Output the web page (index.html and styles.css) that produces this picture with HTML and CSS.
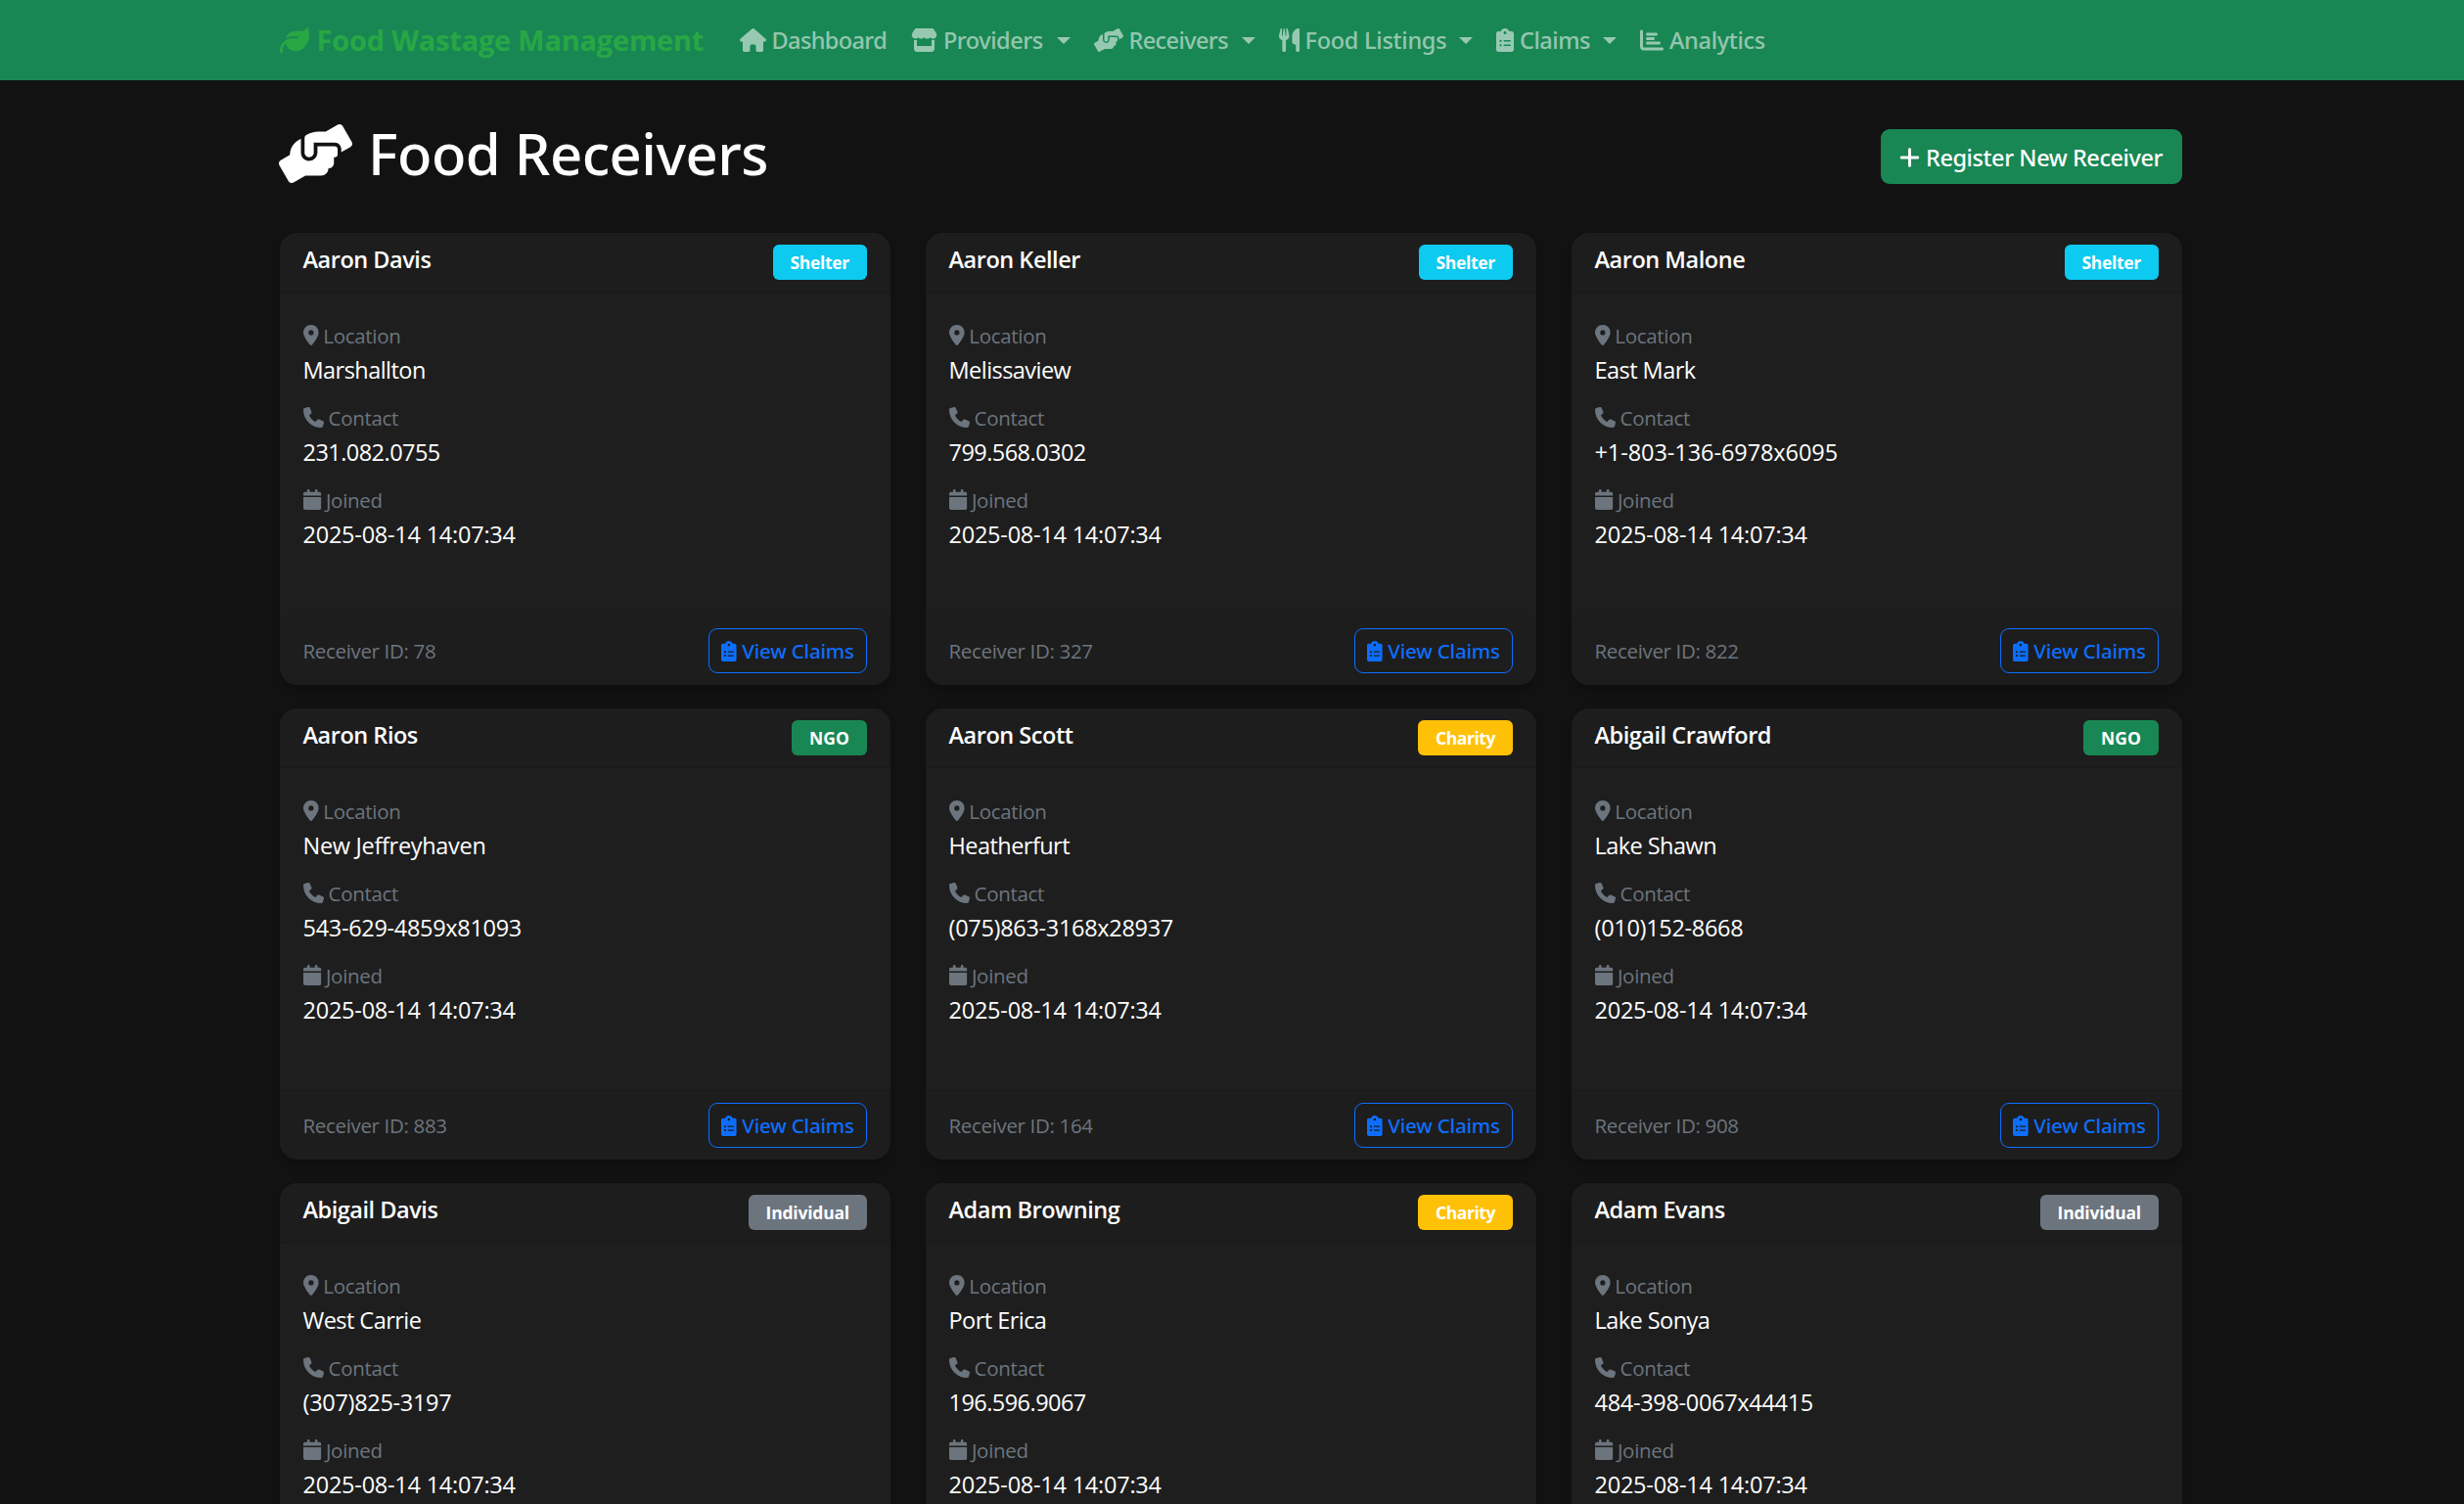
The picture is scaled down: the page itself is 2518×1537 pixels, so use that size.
FILE: index.html
```
<!DOCTYPE html>
<html lang="en">
<head>
<meta charset="utf-8">
<title>Food Receivers</title>
<link rel="stylesheet" href="styles.css">
</head>
<body>
<svg class="sprite" aria-hidden="true">
<symbol id="leaf" viewBox="0 0 512 512"><path d="M272 96c-78.6 0-145.1 51.5-167.7 122.5c33.6-17 71.5-26.5 111.7-26.5h88c8.8 0 16 7.2 16 16s-7.2 16-16 16H288 216s0 0 0 0c-16.6 0-32.7 1.9-48.3 5.4c-25.9 5.9-49.9 16.4-71.4 30.7c0 0 0 0 0 0C38.3 298.8 0 364.9 0 440v16c0 13.3 10.7 24 24 24s24-10.7 24-24V440c0-48.7 20.7-92.5 53.8-123.2C121.6 392.3 190.3 448 272 448l1 0c132.1-.7 239-130.9 239-291.4c0-42.6-7.5-83.1-21.1-119.6c-2.6-6.9-12.7-6.6-16.2-.1C455.9 72.1 418.7 96 376 96L272 96z"/></symbol>
<symbol id="house" viewBox="0 0 576 512"><path d="M575.8 255.5c0 18-15 32.1-32 32.1h-32l.7 160.2c0 2.7-.2 5.4-.5 8.1V472c0 22.1-17.9 40-40 40H456c-1.1 0-2.2 0-3.3-.1c-1.4 .1-2.8 .1-4.2 .1H416 392c-22.1 0-40-17.9-40-40V448 384c0-17.7-14.3-32-32-32H256c-17.7 0-32 14.3-32 32v64 24c0 22.1-17.9 40-40 40H160 128.1c-1.5 0-3-.1-4.5-.2c-1.2 .1-2.4 .2-3.6 .2H104c-22.1 0-40-17.9-40-40V360c0-.9 0-1.9 .1-2.8V287.6H32c-18 0-32-14-32-32.1c0-9 3-17 10-24L266.4 8c7-7 15-8 22-8s15 2 21 7L564.8 231.5c8 7 12 15 11 24z"/></symbol>
<symbol id="store" viewBox="0 0 576 512"><path d="M547.6 103.8L490.3 13.1C485.2 5 476.1 0 466.4 0H109.6C99.9 0 90.8 5 85.7 13.1L28.3 103.8c-29.6 46.8-3.4 111.9 51.9 119.4c4 .5 8.1 .8 12.1 .8c26.1 0 49.3-11.4 65.2-29c15.9 17.6 39.1 29 65.2 29c26.1 0 49.3-11.4 65.2-29c15.9 17.6 39.1 29 65.2 29c26.2 0 49.3-11.4 65.2-29c16 17.6 39.1 29 65.2 29c4.1 0 8.1-.3 12.1-.8c55.5-7.4 81.8-72.5 52.1-119.4zM499.7 254.9l-.1 0c-5.3 .7-10.7 1.1-16.2 1.1c-12.4 0-24.3-1.9-35.4-5.3V384H128V250.6c-11.2 3.5-23.2 5.4-35.6 5.4c-5.5 0-11-.4-16.3-1.1l-.1 0c-4.1-.6-8.1-1.3-12-2.3V384v64c0 35.3 28.7 64 64 64H448c35.3 0 64-28.7 64-64V384 252.6c-4 1-8 1.8-12.3 2.3z"/></symbol>
<symbol id="hands" viewBox="0 0 640 512"><path d="M488 191.1h-152l.0001 51.86c.0001 37.66-27.08 72-64.55 75.77c-43.09 4.333-79.45-29.42-79.45-71.63V126.4l-24.51 14.73C123.2 167.8 96.04 215.7 96.04 267.5L16.04 313.8c-15.25 8.751-20.63 28.38-11.75 43.63l80 138.6c8.875 15.25 28.5 20.5 43.75 11.75l103.4-59.75h136.6c35.25 0 64-28.75 64-64c26.51 0 48-21.49 48-48V288h8c13.25 0 24-10.75 24-24l.0001-48C512 202.7 501.3 191.1 488 191.1zM635.7 154.5l-79.95-138.6c-8.875-15.25-28.5-20.5-43.75-11.75l-103.4 59.75h-62.57c-37.85 0-74.93 10.61-107.1 30.63C229.7 100.4 224 110.6 224 121.6l-.0004 126.4c0 22.13 17.88 40 40 40c22.13 0 40-17.88 40-40V159.1h184c30.93 0 56 25.07 56 56v28.5l80-46.13C639.3 189.4 644.5 169.8 635.7 154.5z"/></symbol>
<symbol id="utensils" viewBox="0 0 448 512"><path d="M221.6 148.7C224.7 161.3 224.8 174.5 222.1 187.2C219.3 199.1 213.6 211.9 205.6 222.1C191.1 238.6 173 249.1 151.1 254.1V472C151.1 482.6 147.8 492.8 140.3 500.3C132.8 507.8 122.6 512 111.1 512C101.4 512 91.22 507.8 83.71 500.3C76.21 492.8 71.1 482.6 71.1 472V254.1C50.96 250.1 31.96 238.9 18.3 222.4C10.19 212.2 4.529 200.3 1.755 187.5C-1.019 174.7-.8315 161.5 2.303 148.8L32.51 12.45C33.36 8.598 35.61 5.197 38.82 2.9C42.02 .602 45.97-.4297 49.89 .0026C53.82 .4302 57.46 2.303 60.1 5.259C62.74 8.214 64.18 12.04 64.16 16V160H81.53L98.62 11.91C99.02 8.635 100.6 5.621 103.1 3.434C105.5 1.248 108.7 .0401 111.1 .0401C115.3 .0401 118.5 1.248 120.9 3.434C123.4 5.621 124.1 8.635 125.4 11.91L142.5 160H159.1V16C159.1 12.07 161.4 8.268 163.1 5.317C166.6 2.366 170.2 .474 174.1 .0026C178-.4262 181.1 .619 185.2 2.936C188.4 5.253 190.6 8.677 191.5 12.55L221.6 148.7zM448 472C448 482.6 443.8 492.8 436.3 500.3C428.8 507.8 418.6 512 408 512C397.4 512 387.2 507.8 379.7 500.3C372.2 492.8 368 482.6 368 472V352H351.2C342.8 352 334.4 350.3 326.6 347.1C318.9 343.8 311.8 339.1 305.8 333.1C299.9 327.1 295.2 320 291.1 312.2C288.8 304.4 287.2 296 287.2 287.6L287.1 173.8C288 136.9 299.1 100.8 319.8 70.28C340.5 39.71 369.8 16.05 404.1 2.339C408.1 .401 414.2-.3202 419.4 .2391C424.6 .7982 429.6 2.62 433.9 5.546C438.2 8.472 441.8 12.41 444.2 17.03C446.7 21.64 447.1 26.78 448 32V472z"/></symbol>
<symbol id="clipboard" viewBox="0 0 384 512"><path d="M336 64h-53.88C268.9 26.8 233.7 0 192 0S115.1 26.8 101.9 64H48C21.5 64 0 85.48 0 112v352C0 490.5 21.5 512 48 512h288c26.5 0 48-21.48 48-48v-352C384 85.48 362.5 64 336 64zM96 392c-13.25 0-24-10.75-24-24S82.75 344 96 344s24 10.75 24 24S109.3 392 96 392zM96 296c-13.25 0-24-10.75-24-24S82.75 248 96 248S120 258.8 120 272S109.3 296 96 296zM192 64c17.67 0 32 14.33 32 32c0 17.67-14.33 32-32 32S160 113.7 160 96C160 78.33 174.3 64 192 64zM304 384h-128C167.2 384 160 376.8 160 368C160 359.2 167.2 352 176 352h128c8.801 0 16 7.199 16 16C320 376.8 312.8 384 304 384zM304 288h-128C167.2 288 160 280.8 160 272C160 263.2 167.2 256 176 256h128C312.8 256 320 263.2 320 272C320 280.8 312.8 288 304 288z"/></symbol>
<symbol id="chart" viewBox="0 0 512 512"><path d="M32 32c17.7 0 32 14.3 32 32V400c0 8.8 7.2 16 16 16H480c17.7 0 32 14.3 32 32s-14.3 32-32 32H80c-44.2 0-80-35.8-80-80V64C0 46.3 14.3 32 32 32zm96 96c0-17.7 14.3-32 32-32l192 0c17.7 0 32 14.3 32 32s-14.3 32-32 32l-192 0c-17.7 0-32-14.3-32-32zm32 64H288c17.7 0 32 14.3 32 32s-14.3 32-32 32H160c-17.7 0-32-14.3-32-32s14.3-32 32-32zm0 96H416c17.7 0 32 14.3 32 32s-14.3 32-32 32H160c-17.7 0-32-14.3-32-32s14.3-32 32-32z"/></symbol>
<symbol id="plus" viewBox="0 0 448 512"><path d="M256 80c0-17.7-14.3-32-32-32s-32 14.3-32 32V224H48c-17.7 0-32 14.3-32 32s14.3 32 32 32H192V432c0 17.7 14.3 32 32 32s32-14.3 32-32V288H400c17.7 0 32-14.3 32-32s-14.3-32-32-32H256V80z"/></symbol>
<symbol id="pin" viewBox="0 0 384 512"><path d="M215.7 499.2C267 435 384 279.4 384 192C384 86 298 0 192 0S0 86 0 192c0 87.4 117 243 168.3 307.2c12.3 15.3 35.1 15.3 47.4 0zM192 128a64 64 0 1 1 0 128 64 64 0 1 1 0-128z"/></symbol>
<symbol id="phone" viewBox="0 0 512 512"><path d="M164.9 24.6c-7.7-18.6-28-28.5-47.4-23.2l-88 24C12.1 30.2 0 46 0 64C0 311.4 200.6 512 448 512c18 0 33.8-12.1 38.6-29.5l24-88c5.3-19.4-4.6-39.7-23.2-47.4l-96-40c-16.3-6.8-35.2-2.1-46.3 11.6L304.7 368C234.3 334.7 177.3 277.7 144 207.3L193.3 167c13.7-11.2 18.4-30 11.6-46.3l-40-96z"/></symbol>
<symbol id="calendar" viewBox="0 0 448 512"><path d="M96 32V64H48C21.5 64 0 85.5 0 112v48H448V112c0-26.5-21.5-48-48-48H352V32c0-17.7-14.3-32-32-32s-32 14.3-32 32V64H160V32c0-17.7-14.3-32-32-32S96 14.3 96 32zM448 192H0V464c0 26.5 21.5 48 48 48H400c26.5 0 48-21.5 48-48V192z"/></symbol>
</svg>

<nav class="navbar">
  <a class="brand"><svg class="icon"><use href="#leaf"/></svg><span>Food Wastage Management</span></a>
  <ul class="nav">
    <li class="nav-link nav-dashboard"><svg class="icon wide"><use href="#house"/></svg><span>Dashboard</span></li>
    <li class="nav-link nav-providers"><svg class="icon wide"><use href="#store"/></svg><span>Providers</span><i class="caret"></i></li>
    <li class="nav-link nav-receivers"><svg class="icon wider"><use href="#hands"/></svg><span>Receivers</span><i class="caret"></i></li>
    <li class="nav-link nav-listings"><svg class="icon narrow"><use href="#utensils"/></svg><span>Food Listings</span><i class="caret"></i></li>
    <li class="nav-link nav-claims"><svg class="icon slim"><use href="#clipboard"/></svg><span>Claims</span><i class="caret"></i></li>
    <li class="nav-link nav-analytics"><svg class="icon"><use href="#chart"/></svg><span>Analytics</span></li>
  </ul>
</nav>

<main class="container">
  <header class="page-head">
    <h1><svg class="icon wider"><use href="#hands"/></svg><span>Food Receivers</span></h1>
    <a class="btn-register"><svg class="icon narrow"><use href="#plus"/></svg><span>Register New Receiver</span></a>
  </header>

  <section class="grid">
    <article class="card">
      <div class="card-header"><h5>Aaron Davis</h5><span class="badge shelter">Shelter</span></div>
      <dl class="card-body">
        <dt><svg class="icon slim"><use href="#pin"/></svg><span>Location</span></dt><dd>Marshallton</dd>
        <dt><svg class="icon"><use href="#phone"/></svg><span>Contact</span></dt><dd>231.082.0755</dd>
        <dt><svg class="icon narrow"><use href="#calendar"/></svg><span>Joined</span></dt><dd class="date">2025-08-14 14:07:34</dd>
      </dl>
      <div class="card-footer"><small>Receiver ID: 78</small><a class="btn-claims"><svg class="icon slim"><use href="#clipboard"/></svg><span>View Claims</span></a></div>
    </article>
    <article class="card">
      <div class="card-header"><h5>Aaron Keller</h5><span class="badge shelter">Shelter</span></div>
      <dl class="card-body">
        <dt><svg class="icon slim"><use href="#pin"/></svg><span>Location</span></dt><dd>Melissaview</dd>
        <dt><svg class="icon"><use href="#phone"/></svg><span>Contact</span></dt><dd>799.568.0302</dd>
        <dt><svg class="icon narrow"><use href="#calendar"/></svg><span>Joined</span></dt><dd class="date">2025-08-14 14:07:34</dd>
      </dl>
      <div class="card-footer"><small>Receiver ID: 327</small><a class="btn-claims"><svg class="icon slim"><use href="#clipboard"/></svg><span>View Claims</span></a></div>
    </article>
    <article class="card">
      <div class="card-header"><h5>Aaron Malone</h5><span class="badge shelter">Shelter</span></div>
      <dl class="card-body">
        <dt><svg class="icon slim"><use href="#pin"/></svg><span>Location</span></dt><dd>East Mark</dd>
        <dt><svg class="icon"><use href="#phone"/></svg><span>Contact</span></dt><dd class="intl">+1-803-136-6978x6095</dd>
        <dt><svg class="icon narrow"><use href="#calendar"/></svg><span>Joined</span></dt><dd class="date">2025-08-14 14:07:34</dd>
      </dl>
      <div class="card-footer"><small>Receiver ID: 822</small><a class="btn-claims"><svg class="icon slim"><use href="#clipboard"/></svg><span>View Claims</span></a></div>
    </article>
    <article class="card">
      <div class="card-header"><h5>Aaron Rios</h5><span class="badge ngo">NGO</span></div>
      <dl class="card-body">
        <dt><svg class="icon slim"><use href="#pin"/></svg><span>Location</span></dt><dd class="dashed">New Jeffreyhaven</dd>
        <dt><svg class="icon"><use href="#phone"/></svg><span>Contact</span></dt><dd class="dashed">543-629-4859x81093</dd>
        <dt><svg class="icon narrow"><use href="#calendar"/></svg><span>Joined</span></dt><dd class="date">2025-08-14 14:07:34</dd>
      </dl>
      <div class="card-footer"><small>Receiver ID: 883</small><a class="btn-claims"><svg class="icon slim"><use href="#clipboard"/></svg><span>View Claims</span></a></div>
    </article>
    <article class="card">
      <div class="card-header"><h5>Aaron Scott</h5><span class="badge charity">Charity</span></div>
      <dl class="card-body">
        <dt><svg class="icon slim"><use href="#pin"/></svg><span>Location</span></dt><dd>Heatherfurt</dd>
        <dt><svg class="icon"><use href="#phone"/></svg><span>Contact</span></dt><dd class="dashed">(075)863-3168x28937</dd>
        <dt><svg class="icon narrow"><use href="#calendar"/></svg><span>Joined</span></dt><dd class="date">2025-08-14 14:07:34</dd>
      </dl>
      <div class="card-footer"><small>Receiver ID: 164</small><a class="btn-claims"><svg class="icon slim"><use href="#clipboard"/></svg><span>View Claims</span></a></div>
    </article>
    <article class="card">
      <div class="card-header"><h5>Abigail Crawford</h5><span class="badge ngo">NGO</span></div>
      <dl class="card-body">
        <dt><svg class="icon slim"><use href="#pin"/></svg><span>Location</span></dt><dd>Lake Shawn</dd>
        <dt><svg class="icon"><use href="#phone"/></svg><span>Contact</span></dt><dd class="dashed">(010)152-8668</dd>
        <dt><svg class="icon narrow"><use href="#calendar"/></svg><span>Joined</span></dt><dd class="date">2025-08-14 14:07:34</dd>
      </dl>
      <div class="card-footer"><small>Receiver ID: 908</small><a class="btn-claims"><svg class="icon slim"><use href="#clipboard"/></svg><span>View Claims</span></a></div>
    </article>
    <article class="card">
      <div class="card-header"><h5>Abigail Davis</h5><span class="badge individual">Individual</span></div>
      <dl class="card-body">
        <dt><svg class="icon slim"><use href="#pin"/></svg><span>Location</span></dt><dd>West Carrie</dd>
        <dt><svg class="icon"><use href="#phone"/></svg><span>Contact</span></dt><dd class="dashed">(307)825-3197</dd>
        <dt><svg class="icon narrow"><use href="#calendar"/></svg><span>Joined</span></dt><dd class="date">2025-08-14 14:07:34</dd>
      </dl>
    </article>
    <article class="card">
      <div class="card-header"><h5>Adam Browning</h5><span class="badge charity">Charity</span></div>
      <dl class="card-body">
        <dt><svg class="icon slim"><use href="#pin"/></svg><span>Location</span></dt><dd>Port Erica</dd>
        <dt><svg class="icon"><use href="#phone"/></svg><span>Contact</span></dt><dd>196.596.9067</dd>
        <dt><svg class="icon narrow"><use href="#calendar"/></svg><span>Joined</span></dt><dd class="date">2025-08-14 14:07:34</dd>
      </dl>
    </article>
    <article class="card">
      <div class="card-header"><h5>Adam Evans</h5><span class="badge individual">Individual</span></div>
      <dl class="card-body">
        <dt><svg class="icon slim"><use href="#pin"/></svg><span>Location</span></dt><dd>Lake Sonya</dd>
        <dt><svg class="icon"><use href="#phone"/></svg><span>Contact</span></dt><dd class="dashed">484-398-0067x44415</dd>
        <dt><svg class="icon narrow"><use href="#calendar"/></svg><span>Joined</span></dt><dd class="date">2025-08-14 14:07:34</dd>
      </dl>
    </article>
  </section>
</main>
</body>
</html>
```
FILE: styles.css
```
* { box-sizing: border-box; }
html { overflow: hidden; }
body {
  margin: 0;
  height: 1537px;
  overflow: hidden;
  background: #121212;
  color: #fff;
  font-family: "Open Sans", "Noto Sans", sans-serif;
  font-size: 23.5px;
}
h1, h5, ul, dl, dd { margin: 0; padding: 0; }
.sprite { display: none; }

/* icon boxes are sized from --i, the glyph em */
.icon { --w: 1; width: calc(var(--i) * var(--w)); height: var(--i); fill: currentColor; flex: none; overflow: visible; }
.icon.wide { --w: 1.125; }
.icon.wider { --w: 1.25; }
.icon.narrow { --w: .875; }
.icon.slim { --w: .75; }

.navbar {
  display: flex;
  align-items: center;
  height: 82px;
  padding-left: 285.5px;
  background: #198754;
}
.brand {
  --i: 30px;
  display: flex;
  align-items: center;
  gap: 8px;
  width: 458px;
  color: #28a745;
  font: 700 29px/44px "Open Sans", sans-serif;
  letter-spacing: -.008em;
  white-space: nowrap;
}
.nav {
  display: flex;
  list-style: none;
  font-family: "Noto Sans", sans-serif;
  font-weight: 500;
  letter-spacing: -.02em;
  color: rgba(255, 255, 255, .55);
}
.nav-link { --i: 24px; display: flex; align-items: center; gap: 6px; height: 60px; padding: 0 12px; white-space: nowrap; line-height: 36px; }
.nav-dashboard { width: 175.5px; letter-spacing: -.026em; }
.nav-providers { width: 186.5px; }
.nav-receivers { width: 189px; letter-spacing: -.026em; }
.nav-listings { width: 222.5px; letter-spacing: -.011em; }
.nav-claims { width: 147px; }
.nav-analytics { width: 152px; letter-spacing: -.0125em; }
.caret { margin-left: auto; border: 7.2px solid transparent; border-top-color: currentColor; border-bottom: 0; }

.container { padding: 0 288px 0 286px; }
.page-head { display: flex; justify-content: space-between; height: 156px; padding-top: 44px; }
h1 {
  --i: 60px;
  display: flex;
  align-items: center;
  gap: 16px;
  height: 61px;
  margin-left: -1px;
  font: 500 58px/72px "Noto Sans", sans-serif;
  letter-spacing: -.0095em;
}
.btn-register {
  --i: 24px;
  display: flex;
  align-items: center;
  gap: 6px;
  width: 308px;
  height: 56px;
  margin-top: 6px;
  padding: 2px 0 0 19px;
  border-radius: 9px;
  background: #198754;
  font-family: "Noto Sans", sans-serif;
  font-weight: 500;
  letter-spacing: -.0184em;
  white-space: nowrap;
}

.grid {
  display: grid;
  grid-template-columns: repeat(3, 624px);
  grid-template-rows: 462px 461px 461px;
  gap: 24px 36px;
}
.card {
  display: flex;
  flex-direction: column;
  border-radius: 18px;
  background: #1e1e1e;
  box-shadow: 0 6px 9px rgba(0, 0, 0, .2);
}
.card-header {
  display: flex;
  justify-content: space-between;
  align-items: flex-start;
  height: 61px;
  padding: 12px 24px 0 23.5px;
  border-bottom: 1px solid #191919;
  border-radius: 18px 18px 0 0;
  background: #1d1d1d;
}
h5 { font: 600 23.5px/31px "Open Sans", sans-serif; letter-spacing: -.02em; }
.badge {
  height: 36px;
  padding: 0 18px;
  border-radius: 6px;
  font-size: 17.5px;
  font-weight: 700;
  line-height: 36px;
  letter-spacing: -.018em;
}
.shelter { background: #0dcaf0; }
.ngo { background: #198754; letter-spacing: .002em; }
.charity { background: #ffc107; letter-spacing: -.026em; }
.individual { background: #6c757d; letter-spacing: -.012em; }

.card-body { flex: 1; padding: 26px 24px 0 23.5px; }
dt {
  --i: 21px;
  display: flex;
  align-items: center;
  gap: 5px;
  height: 35px;
  color: #6c757d;
  font-size: 20.5px;
  letter-spacing: -.014em;
}
dd { margin-bottom: 13px; line-height: 36px; letter-spacing: -.023em; }
dd.date { letter-spacing: -.01em; }
dd.dashed { letter-spacing: -.013em; }
dd.intl { letter-spacing: -.003em; }

.card-footer {
  display: flex;
  justify-content: space-between;
  align-items: center;
  height: 71px;
  padding: 0 24px 0 23.5px;
  border-top: 1px solid #191919;
  border-radius: 0 0 18px 18px;
  background: #1d1d1d;
}
small { color: #6c757d; font-size: 20.5px; letter-spacing: -.0165em; }
.btn-claims {
  --i: 21px;
  display: flex;
  align-items: center;
  gap: 6px;
  width: 162px;
  height: 46px;
  padding: 0 0 0 11.5px;
  border: 1px solid #0d6efd;
  border-radius: 9px;
  color: #0d6efd;
  font: 500 20.5px/30px "Noto Sans", sans-serif;
  letter-spacing: -.009em;
  white-space: nowrap;
}
```
